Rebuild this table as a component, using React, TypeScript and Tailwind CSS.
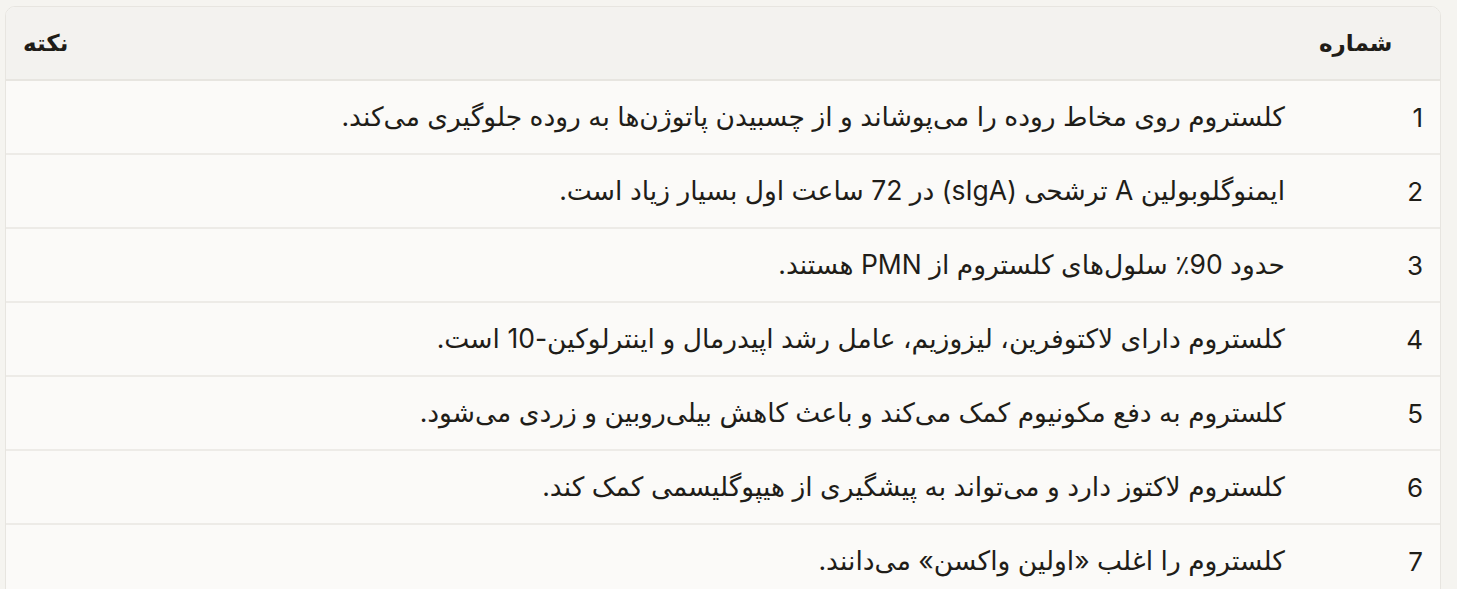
import React from "react";

const rows = [
  "کلستروم روی مخاط روده را می‌پوشاند و از چسبیدن پاتوژن‌ها به روده جلوگیری می‌کند.",
  "ایمنوگلوبولین A ترشحی (sIgA) در 72 ساعت اول بسیار زیاد است.",
  "حدود 90٪ سلول‌های کلستروم از PMN هستند.",
  "کلستروم دارای لاکتوفرین، لیزوزیم، عامل رشد اپیدرمال و اینترلوکین-10 است.",
  "کلستروم به دفع مکونیوم کمک می‌کند و باعث کاهش بیلی‌روبین و زردی می‌شود.",
  "کلستروم لاکتوز دارد و می‌تواند به پیشگیری از هیپوگلیسمی کمک کند.",
  "کلستروم را اغلب «اولین واکسن» می‌دانند.",
];

export default function App() {
  return (
    <div
      className="w-[1457px] h-[589px] overflow-hidden bg-[#f5f4f0] pt-[6px] pl-[5px]"
      style={{ fontFamily: '"Inter", "DejaVu Sans", sans-serif' }}
    >
      <div className="w-[1436px] rounded-t-[10px] border border-[#e7e5e0] overflow-hidden bg-[#fbfaf8]">
        <table dir="rtl" className="w-full border-collapse text-[#1f1d18]">
          <thead>
            <tr className="h-[73px] bg-[#f3f2ef] border-b-2 border-[#e7e5e0]">
              <th className="w-[138px] px-[17px] text-left text-[23px] font-semibold">شماره</th>
              <th className="px-[17px] text-left text-[23px] font-semibold">نکته</th>
            </tr>
          </thead>
          <tbody>
            {rows.map((r, i) => (
              <tr key={i} className="h-[74px] border-b-2 border-[#edebe7]">
                <td className="px-[17px] text-right text-[26px]">{i + 1}</td>
                <td className="px-[17px] text-right text-[26.5px]">{r}</td>
              </tr>
            ))}
          </tbody>
        </table>
      </div>
    </div>
  );
}
